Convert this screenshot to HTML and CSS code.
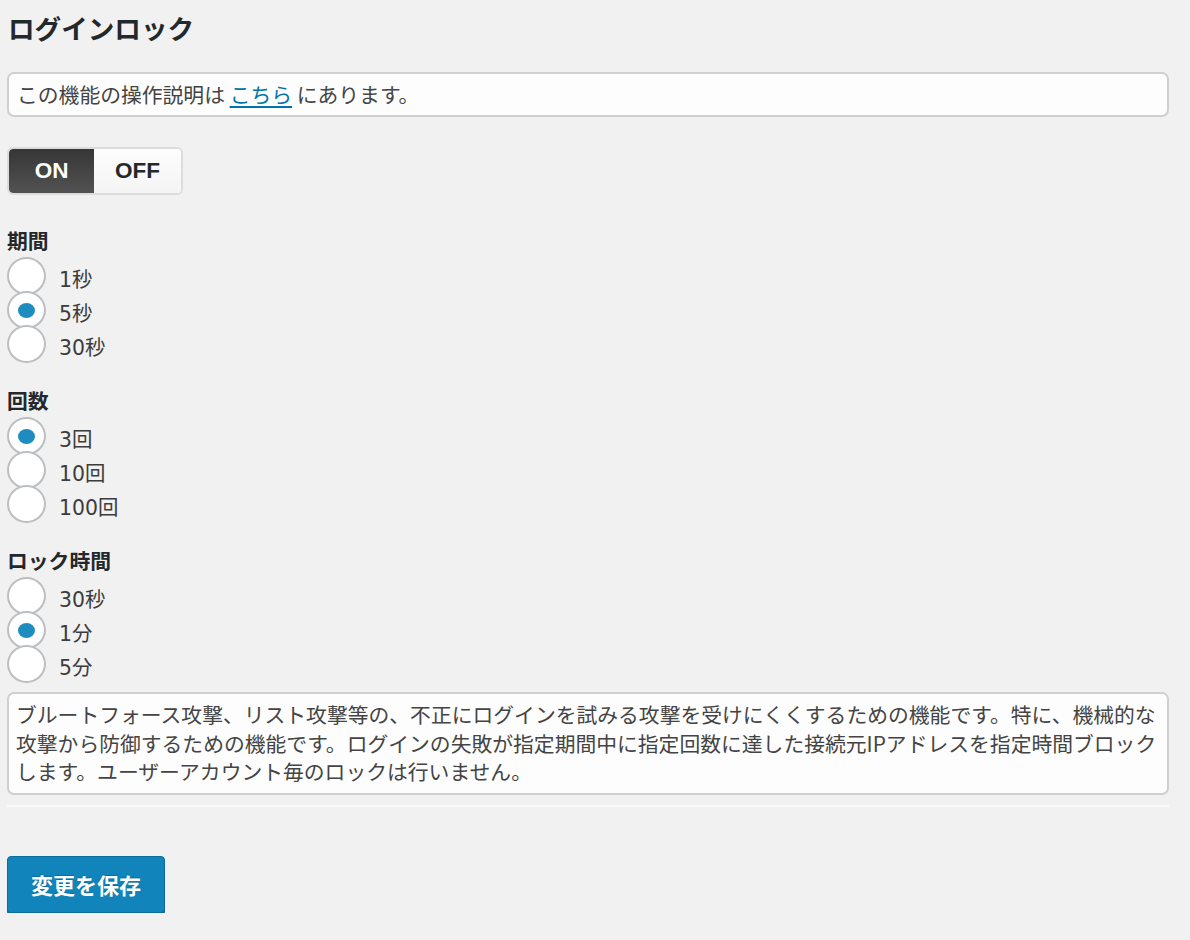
FILE: index.html
```html
<!DOCTYPE html>
<html lang="ja">
<head>
<meta charset="utf-8">
<title>ログインロック</title>
<link rel="stylesheet" href="styles.css">
</head>
<body>
<div class="wrap">
  <h2 class="title">ログインロック</h2>
  <div class="notice">この機能の操作説明は <a href="#" class="link">こちら</a> にあります。</div>
  <div class="toggle"><span class="seg seg-on">ON</span><span class="seg seg-off">OFF</span></div>

  <div class="group group-first">
    <div class="group-label">期間</div>
    <label class="radio"><span class="circle"></span><span class="rtext">1秒</span></label>
    <label class="radio"><span class="circle checked"></span><span class="rtext">5秒</span></label>
    <label class="radio"><span class="circle"></span><span class="rtext">30秒</span></label>
  </div>

  <div class="group">
    <div class="group-label">回数</div>
    <label class="radio"><span class="circle checked"></span><span class="rtext">3回</span></label>
    <label class="radio"><span class="circle"></span><span class="rtext">10回</span></label>
    <label class="radio"><span class="circle"></span><span class="rtext">100回</span></label>
  </div>

  <div class="group">
    <div class="group-label">ロック時間</div>
    <label class="radio"><span class="circle"></span><span class="rtext">30秒</span></label>
    <label class="radio"><span class="circle checked"></span><span class="rtext">1分</span></label>
    <label class="radio"><span class="circle"></span><span class="rtext">5分</span></label>
  </div>

  <div class="desc">ブルートフォース攻撃、リスト攻撃等の、不正にログインを試みる攻撃を受けにくくするための機能です。特に、機械的な攻撃から防御するための機能です。ログインの失敗が指定期間中に指定回数に達した接続元IPアドレスを指定時間ブロックします。ユーザーアカウント毎のロックは行いません。</div>
  <div class="sep"></div>
  <button class="save" type="button">変更を保存</button>
</div>
</body>
</html>
```
FILE: styles.css
```css
html, body {
  margin: 0;
  padding: 0;
  background: #f1f1f1;
}
body {
  font-family: "Noto Sans CJK JP", "Noto Sans", sans-serif;
  color: #444;
  font-size: 20.8px;
}
.wrap {
  padding-left: 7px;
  width: 1162px;
}
.title {
  margin: 0;
  padding: 10px 0 0 1px;
  font-size: 26.6px;
  line-height: 36px;
  font-weight: 700;
  color: #23282d;
}
.notice {
  margin-top: 26px;
  background: #fdfdfd;
  border: 2px solid #cfcfcf;
  border-radius: 7px;
  padding: 6px 8px;
  line-height: 29px;
}
.link {
  color: #0073aa;
  text-decoration: underline;
  text-underline-offset: 3px;
}
.toggle {
  margin-top: 30px;
  display: inline-flex;
  border: 2px solid #dcdcdc;
  border-radius: 6px;
  overflow: hidden;
  height: 44px;
  background: #fafafa;
}
.seg {
  display: flex;
  align-items: center;
  justify-content: center;
  font-family: "Liberation Sans", Arial, sans-serif;
  font-weight: 700;
  font-size: 22.5px;
}
.seg-on {
  width: 85px;
  color: #fff;
  background: linear-gradient(#363636, #525252);
  border-radius: 4px 0 0 4px;
}
.seg-off {
  width: 87px;
  color: #23282d;
  background: linear-gradient(#fdfdfd, #f4f4f4);
}
.group {
  margin-top: 25px;
}
.group-first {
  margin-top: 31px;
}
.group-label {
  font-weight: 700;
  color: #23282d;
  line-height: 28px;
  margin-bottom: 5px;
}
.radio {
  display: flex;
  align-items: center;
  height: 34px;
}
.circle {
  box-sizing: border-box;
  width: 39px;
  height: 38px;
  flex: 0 0 auto;
  border: 2px solid #bcbfc2;
  border-radius: 50%;
  background: #fff;
  display: flex;
  align-items: center;
  justify-content: center;
}
.circle.checked::after {
  content: "";
  width: 17px;
  height: 15px;
  border-radius: 50%;
  background: #1e8cbe;
}
.rtext {
  margin-left: 13px;
  padding-top: 8px;
  line-height: 28px;
  color: #3c3c3c;
  font-family: "DejaVu Sans", "Noto Sans CJK JP", sans-serif;
  font-size: 20.4px;
}
.desc {
  margin-top: 11px;
  background: #fdfdfd;
  border: 2px solid #cfcfcf;
  border-radius: 7px;
  padding: 6px 3px 7px 7px;
  line-height: 28.5px;
}
.sep {
  margin-top: 10px;
  height: 2px;
  background: #fafafa;
}
.save {
  margin-top: 49px;
  width: 158px;
  height: 57px;
  background: #1185bb;
  border: 1px solid #0b6d9b;
  border-radius: 4px;
  box-shadow: 0 2px 0 #0a679a;
  color: #fff;
  font-family: "Noto Sans CJK JP", sans-serif;
  font-weight: 700;
  font-size: 22px;
  padding: 0;
  text-shadow: 0 -1px 1px #0b6d9b;
}
```
